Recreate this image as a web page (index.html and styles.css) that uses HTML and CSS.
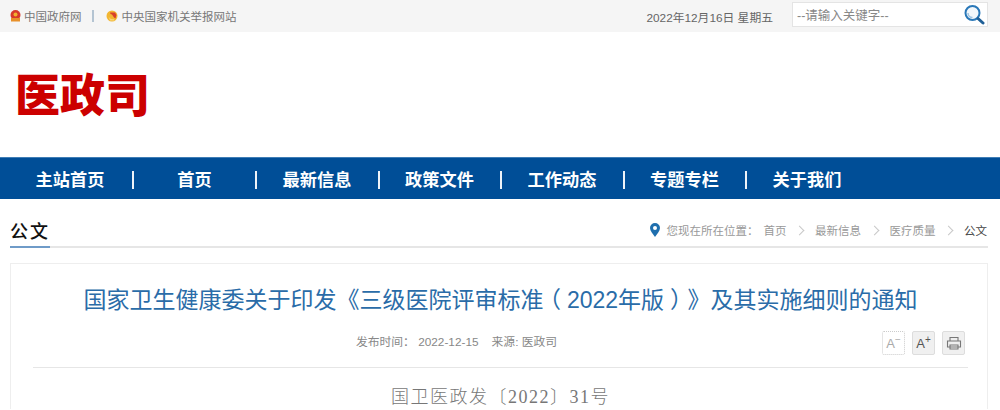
FILE: index.html
```html
<!DOCTYPE html>
<html lang="zh-CN">
<head>
    <meta charset="UTF-8">
    <title>医政司</title>
    <link rel="stylesheet" href="styles.css">
</head>
<body>
    <div class="topbar">
        <div class="top-links">
            <svg class="emblem" width="11" height="12" viewBox="0 0 11 12">
                <circle cx="5.5" cy="5" r="5" fill="#d8392b"/>
                <circle cx="5.5" cy="4.500" r="2" fill="#f0b030"/>
                <rect x="1" y="8" width="9" height="3.500" fill="#e8902a"/>
            </svg>
            <span>中国政府网</span>
            <span class="top-sep"></span>
            <svg class="emblem emblem-party" width="12" height="12" viewBox="0 0 12 12">
                <circle cx="6" cy="6" r="5.500" fill="#f2b632"/>
                <path d="M4 2.500h5l1.500 2.500-1 3.500-1.500-1-2-3-1.500-.500z" fill="#d8402a"/>
                <path d="M2.500 6.500c1 2 3 3 5 2.500l1 1.500H4z" fill="#f7d67a"/>
            </svg>
            <span>中央国家机关举报网站</span>
        </div>
        <div class="top-right">
            <span class="today">2022年12月16日 星期五</span>
            <div class="search">
                <span class="search-hint">--请输入关键字--</span>
                <svg width="22" height="22" viewBox="0 0 22 22">
                    <circle cx="9.500" cy="9" r="7" fill="#f2f7fb" stroke="#2a78b8" stroke-width="2"/>
                    <path d="M5 9a4.500 4.500 0 0 0 4.500 4.500" fill="none" stroke="#9cc2e0" stroke-width="1.500"/>
                    <path d="M15 14.500l5 4.500" stroke="#1f5f96" stroke-width="3" stroke-linecap="round"/>
                </svg>
            </div>
        </div>
    </div>

    <div class="masthead">
        <div class="logo">医政司</div>
    </div>

    <div class="nav">
        <a class="nav-item">主站首页</a><span class="nav-sep"></span>
        <a class="nav-item">首页</a><span class="nav-sep"></span>
        <a class="nav-item">最新信息</a><span class="nav-sep"></span>
        <a class="nav-item">政策文件</a><span class="nav-sep"></span>
        <a class="nav-item">工作动态</a><span class="nav-sep"></span>
        <a class="nav-item">专题专栏</a><span class="nav-sep"></span>
        <a class="nav-item">关于我们</a>
    </div>

    <div class="crumb-row">
        <div class="section-title">公文</div>
        <div class="crumbs">
            <svg class="pin" width="10" height="14" viewBox="0 0 10 14">
                <path d="M5 0a5 5 0 0 1 5 5c0 3-3 6-5 9C3 11 0 8 0 5a5 5 0 0 1 5-5zm0 3a2 2 0 1 0 0 4 2 2 0 0 0 0-4z" fill="#1f6fae" fill-rule="evenodd"/>
            </svg>
            <span class="crumb-lead">您现在所在位置：</span>
            <span>首页</span><span class="chev"></span>
            <span>最新信息</span><span class="chev"></span>
            <span>医疗质量</span><span class="chev"></span>
            <span class="crumb-now">公文</span>
        </div>
    </div>

    <div class="article">
        <h1 class="article-title">国家卫生健康委关于印发《三级医院评审标准<span class="paren">（</span>2022年版<span class="paren">）</span>》及其实施细则的通知</h1>
        <div class="meta-row">
            <div class="meta">
                <span>发布时间： 2022-12-15</span>
                <span>来源: 医政司</span>
            </div>
            <div class="tools">
                <span class="tool tool-off">A<sup>−</sup></span>
                <span class="tool">A<sup>+</sup></span>
                <span class="tool">
                    <svg width="16" height="14" viewBox="0 0 16 14">
                        <path d="M4 5V1.500h8V5M1.500 5h13v6h-13zM4 9h8v4H4z" fill="#eee" stroke="#777" stroke-width="1.100"/>
                    </svg>
                </span>
            </div>
        </div>
        <div class="doc-no">国卫医政发〔2022〕31号</div>
    </div>
</body>
</html>
```

FILE: styles.css
```css
* {
    box-sizing: border-box;
}
html, body {
    height: 410px;
    overflow: hidden;
}
body {
    margin: 0;
    background: #fff;
    font-family: "Liberation Sans", "Noto Sans CJK SC", sans-serif;
    color: #666;
}
.topbar {
    height: 32px;
    background: #f5f5f5;
    display: flex;
    justify-content: space-between;
    align-items: center;
    padding: 0 12px 0 10px;
    font-size: 11.500px;
}
.top-links {
    display: flex;
    align-items: center;
    color: #777;
}
.emblem {
    margin-right: 3px;
}
.emblem-party {
    margin-right: 4px;
}
.top-sep {
    width: 2px;
    height: 12px;
    margin: 0 12px 0 10px;
    background: #b4c4d2;
}
.top-right {
    display: flex;
    align-items: center;
}
.today {
    font-size: 11.800px;
    margin-right: 19px;
}
.search {
    width: 196px;
    height: 25px;
    margin-bottom: 3px;
    background: #fff;
    border: 1px solid #e4e4e4;
    display: flex;
    justify-content: space-between;
    align-items: center;
    padding: 0 2px 0 4px;
}
.search-hint {
    font-size: 12.500px;
    color: #888;
}
.masthead {
    height: 125px;
    padding: 35px 0 0 15px;
}
.logo {
    font-size: 45px;
    line-height: 60px;
    font-weight: 900;
    color: #cc0000;
}
.nav {
    height: 42px;
    background: #004e97;
    border-top: 1px solid #3f7db5;
    display: flex;
    align-items: center;
    padding-left: 8.500px;
}
.nav-item {
    width: 121px;
    text-align: center;
    color: #fff;
    font-size: 17.200px;
    font-weight: 700;
}
.nav-item:first-child {
    width: 123px;
}
.nav-sep {
    width: 2px;
    height: 18px;
    background: #eef3f8;
    margin-top: 2px;
    margin-right: -0.500px;
}
.nav-sep:nth-child(2) {
    margin-right: 0.500px;
}
.crumb-row {
    margin: 20px 12px 0 10px;
    height: 29px;
    border-bottom: 2px solid #e6e6e6;
    display: flex;
    justify-content: space-between;
}
.section-title {
    height: 29px;
    border-bottom: 2px solid #6f9bc8;
    font-size: 18px;
    line-height: 26px;
    font-weight: 500;
    color: #111;
    letter-spacing: 2px;
}
.crumbs {
    display: flex;
    align-items: center;
    height: 22px;
    margin-right: 1px;
    font-size: 11.500px;
    color: #999;
}
.pin {
    margin-right: 7px;
}
.crumb-lead {
    margin-right: 5px;
}
.chev {
    width: 7px;
    height: 7px;
    border-top: 1px solid #c8c8c8;
    border-right: 1px solid #c8c8c8;
    transform: rotate(45deg);
    margin: 0 12px 0 9.500px;
}
.crumb-now {
    color: #444;
}
.article {
    margin: 15px 12px 0 10px;
    height: 146px;
    border: 1px solid #eee;
    border-bottom: 0;
    padding: 0 19px 0 22px;
}
.article-title {
    margin: 0;
    padding-top: 18px;
    height: 62px;
    text-align: center;
    font-size: 23px;
    line-height: 37px;
    font-weight: 400;
    color: #2a6ca8;
    white-space: nowrap;
    text-spacing-trim: space-all;
}
.paren {
    font-feature-settings: "halt";
    margin: 0 6px;
}
.meta-row {
    height: 42px;
    border-bottom: 1px solid #e6e6e6;
    display: flex;
    justify-content: center;
    position: relative;
    padding-top: 6px;
}
.meta {
    display: flex;
    gap: 13px;
    font-size: 11.800px;
    line-height: 20px;
    color: #888;
    margin-right: 88px;
}
.tools {
    position: absolute;
    right: 3px;
    top: 5px;
    display: flex;
    gap: 7px;
}
.tool {
    width: 23px;
    height: 24px;
    background: #f0f0f0;
    border: 1px solid #ddd;
    border-radius: 2px;
    display: flex;
    align-items: center;
    justify-content: center;
    font-size: 13px;
    color: #555;
}
.tool sup {
    font-size: 10px;
    line-height: 1;
    margin-top: -6px;
}
.tool-off {
    background: #fff;
    border: 1px dotted #ccc;
    color: #aaa;
}
.doc-no {
    margin-top: 16px;
    text-align: center;
    font-family: "Liberation Serif", "Noto Sans CJK SC", serif;
    font-size: 18px;
    line-height: 26px;
    font-weight: 300;
    letter-spacing: 1.500px;
    color: #777;
    text-spacing-trim: space-all;
}
```
